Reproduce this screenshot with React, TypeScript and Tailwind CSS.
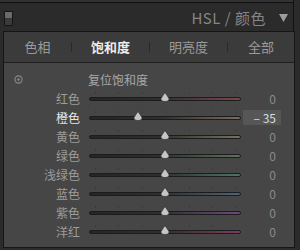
import React from 'react';

const FONT = { fontFamily: '"Noto Sans CJK SC", "Noto Sans", sans-serif' };

interface Row {
  label: string;
  value: number;
  color: string;
  active?: boolean;
}

const ROWS: Row[] = [
  { label: '红色', value: 0, color: '#7c4650' },
  { label: '橙色', value: -35, color: '#7a6a58', active: true },
  { label: '黄色', value: 0, color: '#777258' },
  { label: '绿色', value: 0, color: '#5a7656' },
  { label: '浅绿色', value: 0, color: '#4d7468' },
  { label: '蓝色', value: 0, color: '#4c6478' },
  { label: '紫色', value: 0, color: '#6c4a7c' },
  { label: '洋红', value: 0, color: '#7a3c5a' },
];

const TICKS = [6, 29, 53, 76, 100, 123, 147];

const Thumb = () => (
  <svg width="10" height="10" viewBox="0 0 10 10">
    <path d="M5 0.5 L8.8 6.2 Q9.6 9.5 5 9.5 Q0.4 9.5 1.2 6.2 Z" fill="#c6c6c6" stroke="#2a2a2a" strokeWidth="0.6" />
  </svg>
);

const Slider = ({ value, color }: { value: number; color: string }) => {
  const left = 76 + value * 0.76;
  return (
    <div className="relative h-[19px] w-[152px]">
      {TICKS.map(t => (
        <div key={t} className="absolute top-[3px] h-[2px] w-[1px] bg-[#3a3a3a]" style={{ left: t }} />
      ))}
      <div
        className="absolute top-[8px] left-0 h-[4px] w-[152px] rounded-full border border-[#1c1c1c]"
        style={{ background: `linear-gradient(to right, #262626 0%, #2e2e2e 45%, ${color} 100%)` }}
      />
      <div className="absolute top-[3px]" style={{ left: left - 5 }}>
        <Thumb />
      </div>
    </div>
  );
};

const App: React.FC = () => {
  return (
    <div className="w-[300px] h-[250px] bg-[#2b2b2b] overflow-hidden" style={FONT}>
      <div className="h-[3px] w-[294px] bg-[#323232] border-b border-r border-[#111]" />
      <div className="h-[28px] w-[294px] flex items-center border-r border-[#111]">
        <div className="ml-[4px] mt-[2px] w-[9px] h-[15px] rounded-[1px] border border-[#151515] flex flex-col overflow-hidden">
          <div className="flex-1 bg-[#6a6a6a]" />
          <div className="flex-1 bg-[#3a3a3a]" />
        </div>
        <div className="flex-1" />
        <span className="text-[15px] text-[#858585] leading-none tracking-[0.5px]">HSL / 颜色</span>
        <svg className="ml-[13px] mr-[5px]" width="9" height="9" viewBox="0 0 9 9">
          <path d="M0 1 L9 1 L4.5 9 Z" fill="#9c9c9c" />
        </svg>
      </div>
      <div className="ml-[3px] w-[292px] h-[217px] border border-[#161616] flex flex-col">
        <div className="h-[31px] bg-[#3b3b3b] border-b border-[#1e1e1e] flex items-center text-[13px]">
          <div className="w-[67px] text-center text-[#9a9a9a]">色相</div>
          <div className="w-[1px] h-[10px] bg-[#2a2a2a]" />
          <div className="w-[77px] text-center text-[#ececec] font-bold">饱和度</div>
          <div className="w-[1px] h-[10px] bg-[#2a2a2a]" />
          <div className="w-[77px] text-center text-[#9a9a9a]">明亮度</div>
          <div className="w-[1px] h-[10px] bg-[#2a2a2a]" />
          <div className="flex-1 text-center text-[#9a9a9a]">全部</div>
        </div>
        <div className="flex-1 bg-[#464646] pt-[7px]">
          <div className="h-[19px] flex items-center">
            <svg className="ml-[10px]" width="9" height="9" viewBox="0 0 9 9">
              <circle cx="4.5" cy="4.5" r="3.6" fill="none" stroke="#8a8a8a" strokeWidth="1.1" />
              <circle cx="4.5" cy="4.5" r="1.2" fill="#8a8a8a" />
            </svg>
            <span className="ml-[65px] text-[12px] text-[#a8a8a8] leading-none">复位饱和度</span>
          </div>
          {ROWS.map(r => (
            <div key={r.label} className="h-[19px] flex items-center">
              <div className={`w-[76px] text-right text-[12px] leading-none ${r.active ? 'text-[#e6e6e6]' : 'text-[#9c9c9c]'}`}>
                {r.label}
              </div>
              <div className="ml-[9px]">
                <Slider value={r.value} color={r.color} />
              </div>
              <div
                className={`ml-[2px] w-[38px] h-[15px] flex items-center justify-end pr-[5px] text-[12px] leading-none ${
                  r.active ? 'bg-[#565656] text-[#dcdcdc]' : 'text-[#8a8a8a]'
                }`}
              >
                {r.value < 0 ? `– ${-r.value}` : r.value}
              </div>
            </div>
          ))}
        </div>
      </div>
    </div>
  );
};

export default App;
